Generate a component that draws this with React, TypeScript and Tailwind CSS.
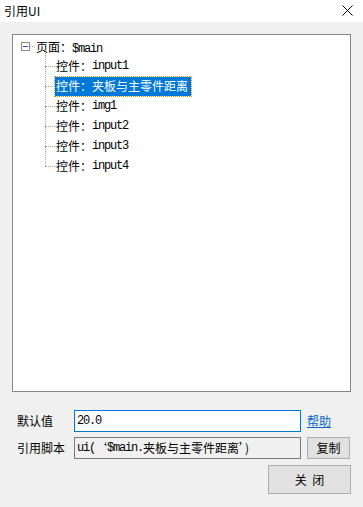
import React from "react"

const cjk = "font-['Noto_Sans_CJK_SC','Noto_Sans',sans-serif]"
const mono = "font-['Liberation_Mono','Noto_Sans_CJK_SC',monospace] tracking-[-1.2px]"

const items = [
  { name: "input1" },
  { name: "夹板与主零件距离", selected: true, cjkName: true },
  { name: "img1" },
  { name: "input2" },
  { name: "input3" },
  { name: "input4" },
]

const TreeRow = ({ name, selected, cjkName }: { name: string; selected?: boolean; cjkName?: boolean }) => {
  return (
    <div className="flex h-[20px] items-center">
      <span className="h-0 w-[10px] border-t border-dotted border-[#a0a0a0]"></span>
      <span
        className={`flex h-[19px] items-center pl-[1px] pr-[3px] leading-none ${
          selected ? "bg-[#0078d7] text-white outline outline-1 outline-dotted outline-[#e08a1e]" : "text-black"
        }`}
      >
        <span className={`${cjk} text-[12px]`}>控件：</span>
        <span className={`${cjkName ? cjk : mono} text-[12px]`}>{name}</span>
      </span>
    </div>
  )
}

export default function App() {
  return (
    <div className="flex h-[507px] w-[363px] flex-col bg-[#f0f0f0] text-black">
      {/* title bar */}
      <div className="flex h-[22px] items-center justify-between bg-white pl-[4px] pr-[10px]">
        <span className={`${cjk} text-[12px] leading-none`}>引用UI</span>
        <svg width="11" height="11" viewBox="0 0 11 11" className="mb-[2px]">
          <path d="M0.5 0.5 L10.5 10.5 M10.5 0.5 L0.5 10.5" stroke="#000" strokeWidth="1" />
        </svg>
      </div>

      {/* tree */}
      <div className="ml-[12px] mt-[12px] h-[358px] w-[339px] border border-[#828790] bg-white pt-[1px]">
        <div className="flex h-[20px] items-center pl-[8px]">
          <span className="flex h-[9px] w-[9px] items-center justify-center border border-[#8c8c8c] bg-white">
            <span className="h-[1px] w-[5px] bg-[#2050c0]"></span>
          </span>
          <span className="h-0 w-[5px] border-t border-dotted border-[#a0a0a0]"></span>
          <span className="pl-[1px] leading-none">
            <span className={`${cjk} text-[12px]`}>页面：</span>
            <span className={`${mono} text-[12px]`}>$main</span>
          </span>
        </div>
        <div className="relative ml-[32px]">
          <span className="absolute left-0 top-[-3px] bottom-[10px] border-l border-dotted border-[#a0a0a0]"></span>
          {items.map((it) => (
            <TreeRow key={it.name} name={it.name} selected={it.selected} cjkName={it.cjkName} />
          ))}
        </div>
      </div>

      {/* default value */}
      <div className="mt-[18px] flex h-[22px] items-center pl-[17px]">
        <span className={`${cjk} w-[57px] text-[12px] leading-none`}>默认值</span>
        <div className="flex h-[22px] w-[227px] items-center border border-[#0078d7] bg-white pl-[2px]">
          <span className={`${mono} text-[12px] leading-none`}>20.0</span>
        </div>
        <span className={`${cjk} ml-[6px] text-[12px] leading-none text-[#0066cc] underline`}>帮助</span>
      </div>

      {/* script */}
      <div className="mt-[5px] flex h-[22px] items-center pl-[17px]">
        <span className={`${cjk} w-[57px] text-[12px] leading-none`}>引用脚本</span>
        <div className="flex h-[22px] w-[227px] items-center border border-[#7a7a7a] bg-[#f0f0f0] pl-[2px] leading-none">
          <span className={`${mono} text-[12px]`}>ui(</span>
          <span className={`${cjk} text-[12px]`}>‘</span>
          <span className={`${mono} text-[12px]`}>$main.</span>
          <span className={`${cjk} text-[12px]`}>夹板与主零件距离’)</span>
        </div>
        <button className={`${cjk} ml-[6px] flex h-[22px] w-[43px] items-center justify-center border border-[#adadad] bg-[#e1e1e1] text-[12px] leading-none`}>
          复制
        </button>
      </div>

      {/* close */}
      <div className="mt-[6px] flex justify-end pr-[12px]">
        <button className={`${cjk} flex h-[29px] w-[83px] items-center justify-center border border-[#adadad] bg-[#e1e1e1] text-[12px] leading-none`}>
          关&nbsp;&nbsp;闭
        </button>
      </div>
    </div>
  )
}
